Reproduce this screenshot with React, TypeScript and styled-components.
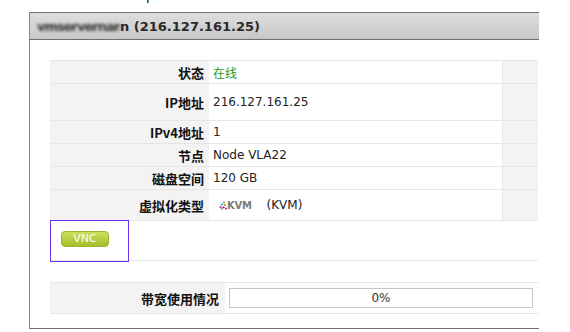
import React from 'react';
import styled, { createGlobalStyle } from 'styled-components';

const GlobalStyle = createGlobalStyle`
    html, body {
        margin: 0;
        padding: 0;
        background: #fff;
    }
    body {
        font-family: "DejaVu Sans", Verdana, "Noto Sans CJK SC", sans-serif;
        font-size: 12px;
        color: #222;
    }
`;

const rows = [
    { label: '状态', value: '在线', height: 23, online: true },
    { label: 'IP地址', value: '216.127.161.25', height: 37 },
    { label: 'IPv4地址', value: '1', height: 23 },
    { label: '节点', value: 'Node VLA22', height: 23 },
    { label: '磁盘空间', value: '120 GB', height: 23 },
    { label: '虚拟化类型', value: 'kvm', height: 31 },
];

const KvmLogo = () => (
    <LogoWrap>
        <svg width="8" height="9" viewBox="0 0 8 9">
            <circle cx="5" cy="1.5" r="1.1" fill="#6cb62f" />
            <circle cx="3" cy="3.5" r="1.1" fill="#1f9ad6" />
            <circle cx="6" cy="4" r="1.1" fill="#f08a10" />
            <circle cx="1.5" cy="6" r="1.1" fill="#e0186c" />
            <circle cx="4.5" cy="6.5" r="1.1" fill="#5a2687" />
            <circle cx="7" cy="7.5" r="1" fill="#c1272d" />
            <circle cx="2.5" cy="8" r="0.9" fill="#888" />
        </svg>
        <LogoText>KVM</LogoText>
    </LogoWrap>
);

const App: React.FC = () => (
    <>
        <GlobalStyle />
        <Caption>
            <CaptionText>p</CaptionText>
        </Caption>
        <Panel>
            <PanelHeader>
                <Blurred>vmservernam</Blurred>n (216.127.161.25)
            </PanelHeader>
            <PanelBody>
                <InfoTable>
                    {rows.map((row) => (
                        <InfoRow key={row.label} $height={row.height}>
                            <LabelCell>{row.label}</LabelCell>
                            <ValueCell $online={row.online}>
                                {row.value === 'kvm' ? (
                                    <>
                                        <KvmLogo />
                                        <KvmSuffix>(KVM)</KvmSuffix>
                                    </>
                                ) : (
                                    row.value
                                )}
                            </ValueCell>
                            <ExtraCell />
                        </InfoRow>
                    ))}
                    <VncRow>
                        <VncCell>
                            <VncButton>VNC</VncButton>
                        </VncCell>
                    </VncRow>
                </InfoTable>

                <UsageTable>
                    <UsageLabel>带宽使用情况</UsageLabel>
                    <UsageValue>
                        <UsageBar>0%</UsageBar>
                    </UsageValue>
                </UsageTable>
            </PanelBody>
        </Panel>
    </>
);

const Caption = styled.div`
    height: 12px;
    overflow: hidden;
`;

const CaptionText = styled.div`
    margin-top: -11px;
    padding-left: 146px;
    font-size: 13px;
    line-height: 13px;
    color: #000;
`;

const Panel = styled.section`
    width: 509px;
    margin-left: 29px;
    border-left: 1px solid #8a8a8a;
    border-bottom: 1px solid #6e6e6e;
    overflow: hidden;
`;

const PanelHeader = styled.h2`
    margin: 0;
    height: 26px;
    padding-left: 7px;
    display: flex;
    align-items: center;
    background: linear-gradient(#dedede, #c8c8c8);
    border-top: 1px solid #6e6e6e;
    border-bottom: 1px solid #6e6e6e;
    font-family: "DejaVu Sans", Verdana, sans-serif;
    font-size: 13px;
    font-weight: bold;
    color: #2a2a2a;
    white-space: pre;
`;

const Blurred = styled.span`
    display: inline-block;
    width: 83px;
    overflow: hidden;
    color: #333;
    letter-spacing: -1px;
    filter: blur(1.4px);
`;

const PanelBody = styled.div`
    padding: 20px 0 14px 20px;
`;

const InfoTable = styled.div`
    width: 488px;
    border-top: 1px solid #e6e6e6;
`;

const InfoRow = styled.div<{ $height: number }>`
    display: grid;
    grid-template-columns: 159px 293px 1fr;
    height: ${(p) => p.$height}px;
    box-sizing: border-box;
    border-bottom: 1px solid #e6e6e6;
`;

const LabelCell = styled.div`
    display: flex;
    align-items: center;
    justify-content: flex-end;
    padding-right: 5px;
    background: #f3f3f3;
    font-family: "Noto Sans CJK SC", "DejaVu Sans", sans-serif;
    font-size: 13px;
    line-height: 15px;
    font-weight: bold;
    color: #111;
`;

const ValueCell = styled.div<{ $online?: boolean }>`
    display: flex;
    align-items: center;
    padding-left: 4px;
    font-family: "DejaVu Sans", Verdana, "Noto Sans CJK SC", sans-serif;
    font-size: 12px;
    color: ${(p) => (p.$online ? '#1f9a1f' : '#222')};
`;

const ExtraCell = styled.div`
    background: #f3f3f3;
    border-left: 1px solid #e6e6e6;
`;

const LogoWrap = styled.span`
    display: inline-flex;
    align-items: center;
    margin-left: 6px;
`;

const LogoText = styled.span`
    font-family: "DejaVu Sans", sans-serif;
    font-size: 10px;
    font-weight: bold;
    color: #7a7a7a;
    letter-spacing: -0.3px;
`;

const KvmSuffix = styled.span`
    margin-left: 15px;
`;

const VncRow = styled.div`
    height: 41px;
    box-sizing: border-box;
    border-bottom: 1px solid #e6e6e6;
`;

const VncCell = styled.div`
    width: 79px;
    height: 42px;
    margin-top: -1px;
    box-sizing: border-box;
    border: 1px solid #6b33ee;
    padding: 10px 0 0 10px;
`;

const VncButton = styled.button`
    display: block;
    width: 48px;
    height: 16px;
    padding: 0;
    border: 1px solid #9db62c;
    border-radius: 4px;
    background: linear-gradient(#cde05a, #a3be2b);
    color: #fff;
    font-family: "DejaVu Sans", Verdana, sans-serif;
    font-size: 11px;
    line-height: 14px;
    cursor: pointer;
`;

const UsageTable = styled.div`
    display: grid;
    grid-template-columns: 175px 1fr;
    width: 488px;
    height: 32px;
    margin-top: 21px;
    box-sizing: border-box;
    border-top: 1px solid #e6e6e6;
    border-bottom: 1px solid #e6e6e6;
`;

const UsageLabel = styled.div`
    display: flex;
    align-items: center;
    justify-content: flex-end;
    padding-right: 6px;
    background: #f3f3f3;
    font-family: "Noto Sans CJK SC", "DejaVu Sans", sans-serif;
    font-size: 13px;
    line-height: 15px;
    font-weight: bold;
    color: #111;
`;

const UsageValue = styled.div`
    display: flex;
    align-items: center;
    padding: 0 5px 0 4px;
`;

const UsageBar = styled.div`
    flex: 1;
    height: 20px;
    box-sizing: border-box;
    border: 1px solid #c6c6c6;
    display: flex;
    align-items: center;
    justify-content: center;
    font-family: "DejaVu Sans", Verdana, sans-serif;
    font-size: 12px;
    color: #333;
`;

export default App;
